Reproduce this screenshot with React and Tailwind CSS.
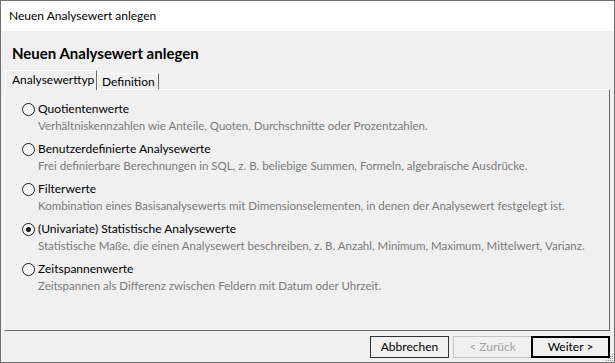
import { useState } from 'react';

const OPTIONS = [
  {
    id: 'quot',
    label: 'Quotientenwerte',
    desc: 'Verhältniskennzahlen wie Anteile, Quoten, Durchschnitte oder Prozentzahlen.',
  },
  {
    id: 'custom',
    label: 'Benutzerdefinierte Analysewerte',
    desc: 'Frei definierbare Berechnungen in SQL, z. B. beliebige Summen, Formeln, algebraische Ausdrücke.',
  },
  {
    id: 'filter',
    label: 'Filterwerte',
    desc: 'Kombination eines Basisanalysewerts mit Dimensionselementen, in denen der Analysewert festgelegt ist.',
  },
  {
    id: 'stat',
    label: '(Univariate) Statistische Analysewerte',
    desc: 'Statistische Maße, die einen Analysewert beschreiben, z. B. Anzahl, Minimum, Maximum, Mittelwert, Varianz.',
  },
  {
    id: 'span',
    label: 'Zeitspannenwerte',
    desc: 'Zeitspannen als Differenz zwischen Feldern mit Datum oder Uhrzeit.',
  },
];

function Radio({ checked }) {
  return (
    <span className="flex h-[13px] w-[13px] shrink-0 items-center justify-center rounded-full border border-[#1a1a1a] bg-white">
      {checked && <span className="h-[5px] w-[5px] rounded-full bg-[#1a1a1a]" />}
    </span>
  );
}

function OptionRow({ option, checked, onSelect }) {
  return (
    <div className="flex flex-col whitespace-nowrap" onClick={onSelect}>
      <div className="flex items-center gap-[3px] leading-[16px] text-black">
        <Radio checked={checked} />
        <span>{option.label}</span>
      </div>
      <p className="mt-[1px] pl-[16px] text-[11.5px] leading-[16px] text-[#7a7a7a]">{option.desc}</p>
    </div>
  );
}

export default function App() {
  const [selected, setSelected] = useState('stat');

  return (
    <div
      className="relative flex h-[363px] w-[615px] flex-col border border-[#6f6f6f] bg-[#f0f0f0] text-[12px]"
      style={{ fontFamily: 'Lato, "Noto Sans", sans-serif' }}
    >
      <div className="flex h-[30px] shrink-0 items-center bg-white pl-[8px] text-black">
        Neuen Analysewert anlegen
      </div>

      <div className="flex flex-1 flex-col px-[3px]">
        <h1 className="mt-[12px] pl-[8px] text-[15px] font-bold leading-[20px] text-black">
          Neuen Analysewert anlegen
        </h1>

        <div className="mt-[7px] flex h-[20px] items-end pl-[1px] whitespace-nowrap">
          <div className="relative z-10 flex h-[20px] w-[92px] items-center border-l border-t border-r border-l-white border-t-white border-r-[#696969] bg-[#f0f0f0] pl-[6px] pb-[1px] text-black">
            Analysewerttyp
          </div>
          <div className="flex h-[17px] w-[62px] items-center border-l border-t border-r border-l-white border-t-white border-r-[#696969] pl-[4px] text-black">
            Definition
          </div>
        </div>

        <div className="-mt-[1px] mr-[1px] flex flex-1 flex-col gap-[7px] border border-b-[#696969] border-l-white border-r-[#696969] border-t-white pl-[17px] pt-[11px]">
          {OPTIONS.map((o) => (
            <OptionRow
              key={o.id}
              option={o}
              checked={selected === o.id}
              onSelect={() => setSelected(o.id)}
            />
          ))}
        </div>

        <div className="flex h-[31px] shrink-0 items-center justify-end pr-[1px]">
          <button className="h-[22px] w-[79px] border border-[#333333] bg-[#f0f0f0] text-black">
            Abbrechen
          </button>
          <button className="ml-[4px] h-[22px] w-[79px] border border-[#c4c4c4] bg-[#f0f0f0] text-[#a0a0a0]">
            &lt; Zurück
          </button>
          <button className="-ml-[1px] h-[22px] w-[79px] border-2 border-black bg-[#f0f0f0] text-black">
            Weiter &gt;
          </button>
        </div>
      </div>

      <svg className="absolute bottom-0 right-0" width="8" height="8" viewBox="0 0 8 8">
        <g fill="#8a8a8a">
          <rect x="6" y="0" width="1" height="1" />
          <rect x="4" y="2" width="1" height="1" />
          <rect x="6" y="2" width="1" height="1" />
          <rect x="2" y="4" width="1" height="1" />
          <rect x="4" y="4" width="1" height="1" />
          <rect x="6" y="4" width="1" height="1" />
          <rect x="0" y="6" width="1" height="1" />
          <rect x="2" y="6" width="1" height="1" />
          <rect x="4" y="6" width="1" height="1" />
          <rect x="6" y="6" width="1" height="1" />
        </g>
      </svg>
    </div>
  );
}
